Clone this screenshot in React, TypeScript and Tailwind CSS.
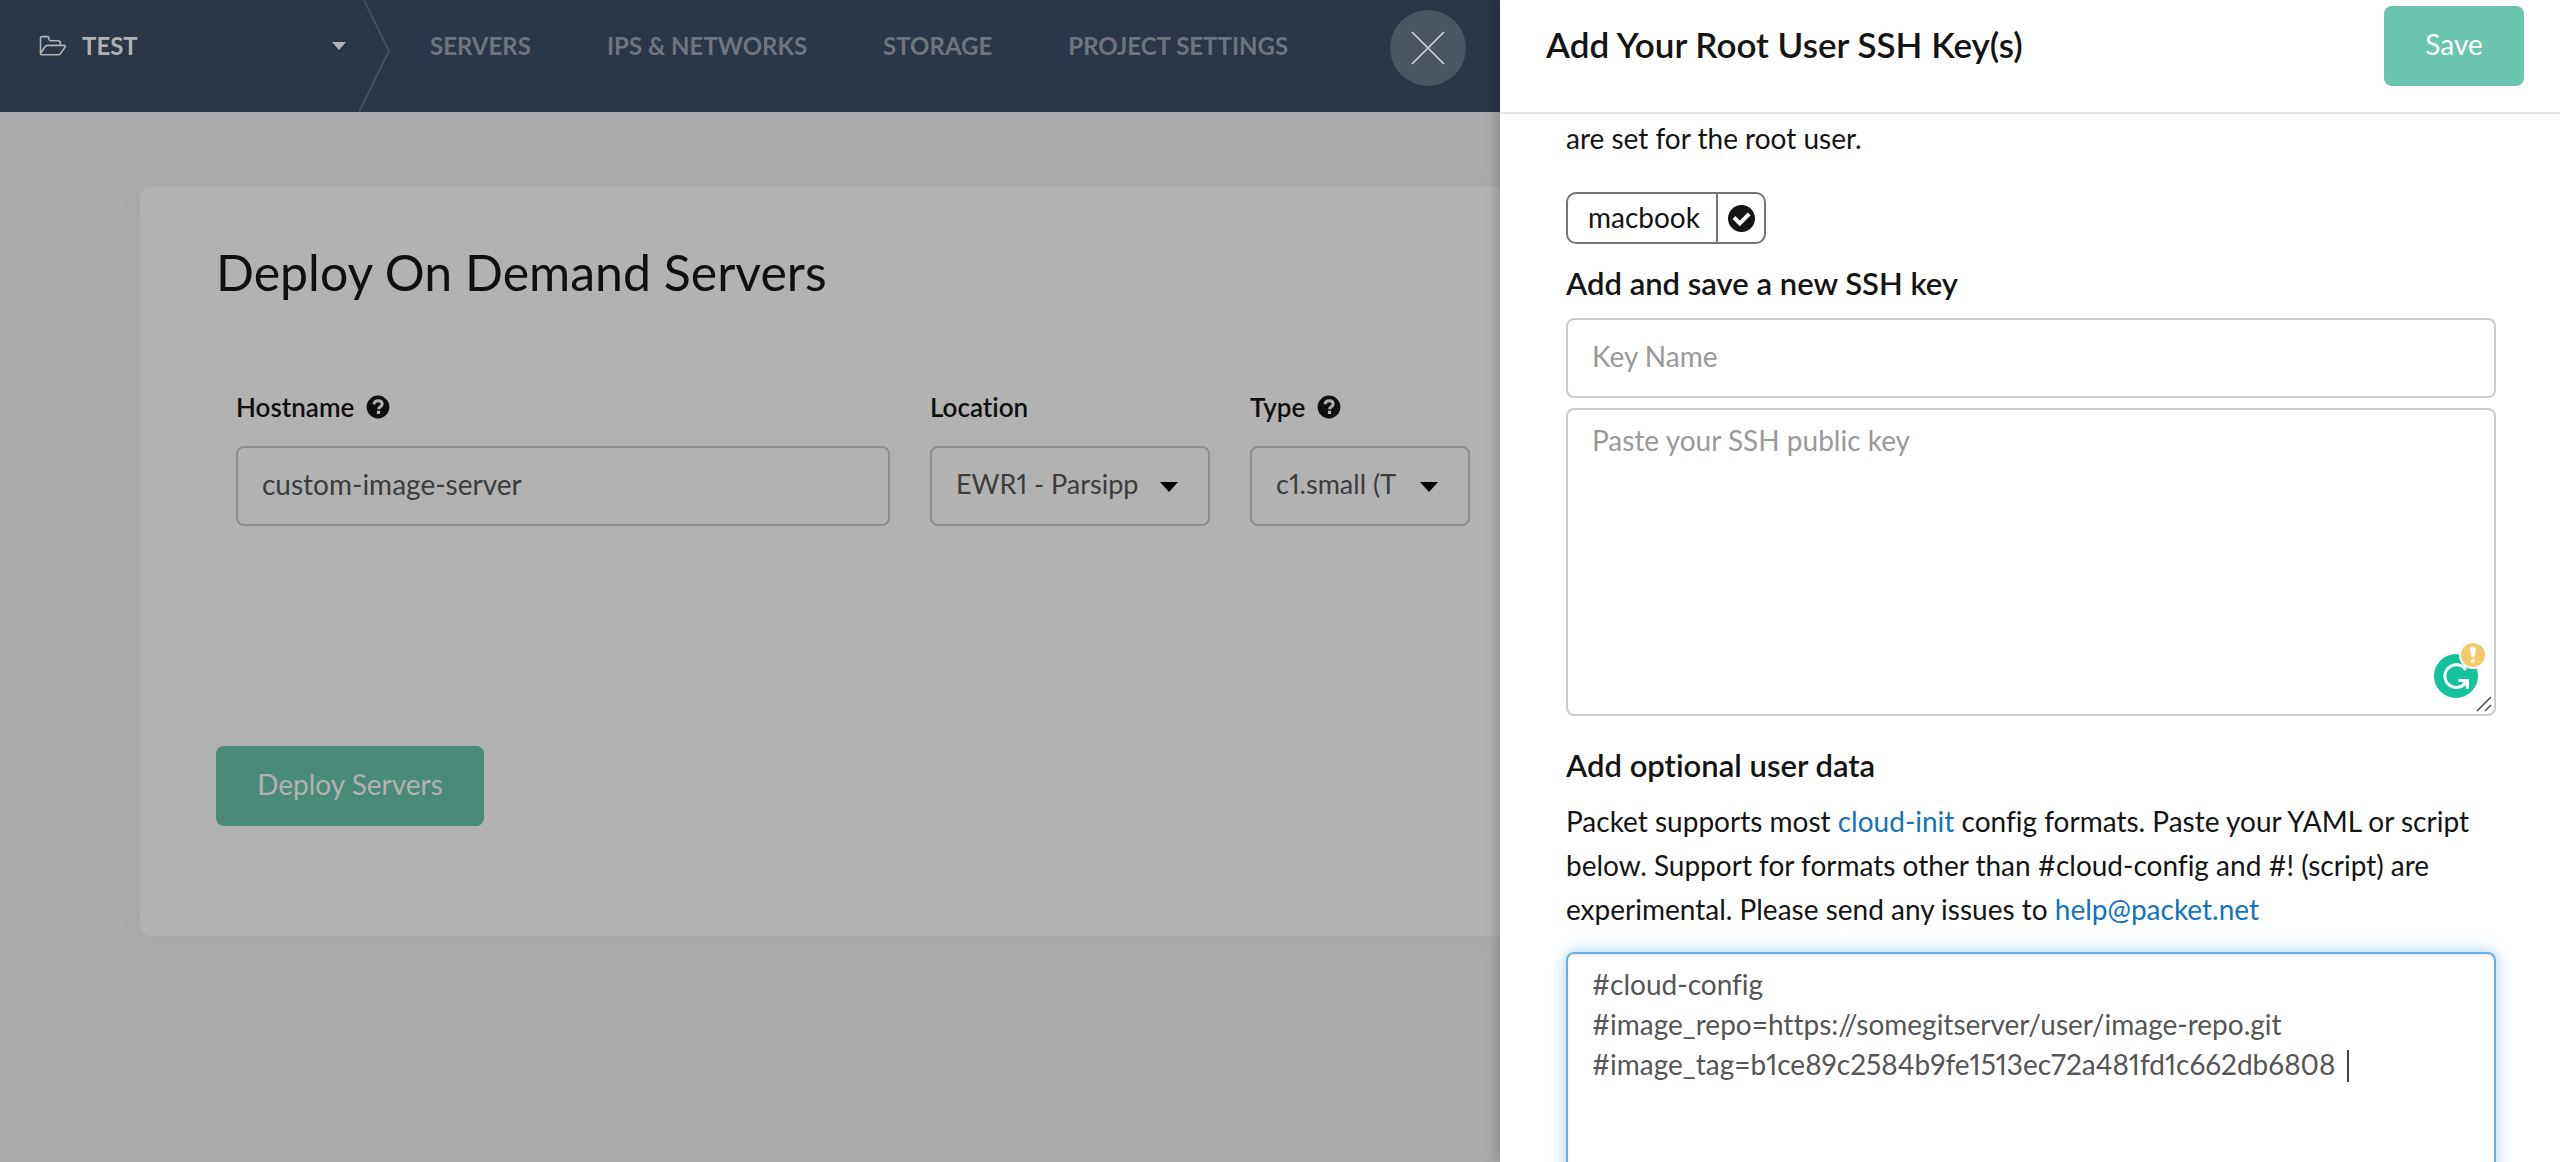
import { useId, type ReactNode } from 'react';

const NAV = ['SERVERS', 'IPS & NETWORKS', 'STORAGE', 'PROJECT SETTINGS'];

const USER_DATA = `#cloud-config
#image_repo=https://somegitserver/user/image-repo.git
#image_tag=b1ce89c2584b9fe1513ec72a481fd1c662db6808`;

function FolderIcon() {
  return (
    <svg viewBox="0 0 28 22" className="h-[22px] w-7 shrink-0" fill="none" stroke="#b2b2b2" strokeWidth="1.6" strokeLinejoin="round" strokeLinecap="round">
      <path d="M1.5 18V3.5C1.5 2.2 2.1 1.6 3.4 1.6H8C9.3 1.6 9.8 2.2 9.9 3.2L10.1 4.6C10.2 5.3 10.6 5.7 11.4 5.7H19C20.6 5.7 21.4 6.4 21.4 8V10.4" />
      <path d="M1.5 18.2L6 11.8C6.7 10.8 7.4 10.4 8.6 10.4H25C26.2 10.4 26.6 11.2 26 12.1L21.8 18.2C21.1 19.3 20.3 19.8 19 19.8H3C1.9 19.8 1.3 19.1 1.5 18.2Z" />
    </svg>
  );
}

function HelpIcon() {
  return (
    <svg viewBox="0 0 24 24" className="size-6 shrink-0">
      <circle cx="12" cy="12" r="11.4" fill="#0f0f0f" />
      <path d="M7.9 9.2C8.3 6.9 9.8 5.7 12.1 5.7C14.5 5.7 16.2 7 16.2 9C16.2 11.7 12.6 11.8 12.6 14.3" fill="none" stroke="#b2b2b2" strokeWidth="3" />
      <rect x="10.9" y="15.8" width="3.2" height="3.2" fill="#b2b2b2" />
    </svg>
  );
}

function AssistantBadge() {
  return (
    <svg viewBox="0 0 54 58" className="absolute right-[9px] bottom-[16px] h-[58px] w-[54px]">
      <circle cx="23" cy="34" r="22" fill="#15c39a" />
      <path d="M32.8 27.8A11.4 11.4 0 1 0 33.8 38.6" fill="none" stroke="#fff" strokeWidth="3" />
      <path d="M25.6 38.4H34.4V47" fill="none" stroke="#fff" strokeWidth="3" />
      <path d="M29.5 43.5L34.2 38.6" fill="none" stroke="#fff" strokeWidth="3" />
      <circle cx="40" cy="13" r="14" fill="#fff" />
      <circle cx="40" cy="13" r="12" fill="#f4cc67" />
      <path d="M37 7.5C37 3.6 43 3.6 43 7.5L41.3 15.2H38.7Z" fill="#fff" />
      <circle cx="40" cy="19" r="2.1" fill="#fff" />
    </svg>
  );
}

function Field({ label, help, className, children }: { label: string; help?: boolean; className: string; children: (id: string) => ReactNode }) {
  const id = useId();
  return (
    <div className={className}>
      <div className="flex items-center gap-3 text-[#0f0f0f]">
        <label htmlFor={id} className="text-[26px] leading-9 font-semibold">{label}</label>
        {help && <HelpIcon />}
      </div>
      <div className="mt-[21px]">{children(id)}</div>
    </div>
  );
}

function SelectBox({ id, value }: { id: string; value: string }) {
  return (
    <div className="relative">
      <select id={id} defaultValue={value} className="h-20 w-full appearance-none rounded-lg border-2 border-[#8e8e8e] bg-transparent pr-14 pb-1 pl-6 text-[27px] leading-10 text-[#3c3c3c]">
        <option>{value}</option>
      </select>
      <svg viewBox="0 0 18 10" className="pointer-events-none absolute top-9 right-8 h-2.5 w-[18px]">
        <path d="M0 0H18L9 10Z" fill="#000" />
      </svg>
    </div>
  );
}

function ProjectHeader() {
  return (
    <header className="relative flex h-28 bg-[#2b3646] pb-5">
      <button className="flex w-[389px] shrink-0 items-center pr-[43px] pl-[39px] text-left">
        <FolderIcon />
        <span className="ml-[15px] flex-1 text-2xl font-bold text-[#b2b2b2]">TEST</span>
        <svg viewBox="0 0 14 8" className="h-2 w-3.5">
          <path d="M0 0H14L7 8Z" fill="#b2b2b2" />
        </svg>
      </button>
      <svg viewBox="0 0 32 112" className="absolute top-0 left-[359px] h-28 w-8" fill="none" stroke="#44505a" strokeWidth="2">
        <path d="M5 0L30 51L0 112" />
      </svg>
      <nav className="ml-[41px] flex items-center gap-[76px] text-2xl font-bold whitespace-nowrap text-[#6f757e]">
        {NAV.map((item) => (
          <a key={item} href="#">{item}</a>
        ))}
      </nav>
      <button aria-label="Close" className="absolute top-2.5 right-[34px] flex size-[76px] items-center justify-center rounded-full bg-[#4c5661]">
        <svg viewBox="0 0 34 34" className="size-[34px]" stroke="#d5d7da" strokeWidth="1.6">
          <path d="M1 1L33 33M33 1L1 33" />
        </svg>
      </button>
    </header>
  );
}

function DeployCard() {
  return (
    <section className="mt-[74px] ml-[140px] rounded-l-xl bg-[#b2b2b2] pt-14 pb-[110px] pl-[76px] shadow-[0_3px_14px_#a8a8a8]">
      <h1 className="text-[50px] leading-[60px] text-[#0f0f0f]">Deploy On Demand Servers</h1>
      <div className="mt-[87px] flex gap-10 pr-[30px] pl-5">
        <Field label="Hostname" help className="flex-1">
          {(id) => (
            <input id={id} defaultValue="custom-image-server" className="h-20 w-full rounded-lg border-2 border-[#8e8e8e] bg-transparent px-6 pb-1 text-[28px] leading-10 text-[#3c3c3c]" />
          )}
        </Field>
        <Field label="Location" className="w-[280px]">
          {(id) => <SelectBox id={id} value="EWR1 - Parsipp" />}
        </Field>
        <Field label="Type" help className="w-[220px]">
          {(id) => <SelectBox id={id} value="c1.small (T" />}
        </Field>
      </div>
      <button className="mt-[220px] block h-20 w-[268px] rounded-lg bg-[#4a8a78] pb-1 text-[28px] text-[#b2b2b2]">Deploy Servers</button>
    </section>
  );
}

function KeyDrawer() {
  return (
    <aside className="relative z-10 flex w-[1060px] shrink-0 flex-col bg-white text-[#141414] shadow-[0_0_14px_rgba(0,0,0,0.3)]">
      <header className="flex h-[114px] shrink-0 items-center justify-between border-b-2 border-[#e6e6e6] pr-9 pb-5 pl-[46px]">
        <h2 className="pb-1 text-[35px] font-semibold">Add Your Root User SSH Key(s)</h2>
        <button className="h-20 w-[140px] rounded-lg bg-[#6bc4ae] pb-1 text-[28px] text-white">Save</button>
      </header>
      <div className="min-h-0 flex-1 overflow-hidden pt-0.5 pr-16 pl-[66px]">
        <p className="text-[28px] leading-[44px]">are set for the root user.</p>
        <label className="mt-8 flex h-[52px] w-[200px] items-stretch rounded-[10px] border-2 border-[#757575] text-[28px]">
          <span className="flex flex-1 items-center pb-0.5 pl-5">macbook</span>
          <span className="grid w-12 place-items-center border-l-2 border-[#757575]">
            <input type="checkbox" defaultChecked className="col-start-1 row-start-1 size-[27px] appearance-none rounded-full bg-[#141414]" />
            <svg viewBox="0 0 27 27" className="pointer-events-none col-start-1 row-start-1 size-[27px]" fill="none" stroke="#fff" strokeWidth="4">
              <path d="M6 12.5L11.8 18.3L21.2 8.9" />
            </svg>
          </span>
        </label>
        <h3 className="mt-[21px] text-[31px] leading-9 font-semibold">Add and save a new SSH key</h3>
        <input aria-label="Key Name" placeholder="Key Name" className="mt-[17px] block h-20 w-full rounded-lg border-2 border-[#cccccc] px-6 pb-1 text-[28px] leading-10 placeholder:text-[#999999]" />
        <div className="relative mt-2.5">
          <textarea aria-label="SSH public key" placeholder="Paste your SSH public key" className="block h-[308px] w-full resize-none rounded-lg border-2 border-[#cccccc] px-6 py-2.5 text-[28px] leading-10 placeholder:text-[#999999]" />
          <AssistantBadge />
          <svg viewBox="0 0 16 16" className="absolute right-1 bottom-1 size-4" stroke="#555" strokeWidth="1.6">
            <path d="M1 15L15 1M9 15L15 9" />
          </svg>
        </div>
        <h3 className="mt-[31px] text-[31px] leading-9 font-semibold">Add optional user data</h3>
        <p className="mt-4 text-[28px] leading-[44px]">
          Packet supports most <a href="#" className="text-[#1273bf]">cloud-init</a> config formats. Paste your YAML or script below. Support for formats other than #cloud-config and #! (script) are experimental. Please send any issues to{' '}
          <a href="#" className="text-[#1273bf]">help@packet.net</a>
        </p>
        <div className="relative mt-[21px]">
          <textarea aria-label="User data" defaultValue={USER_DATA} spellCheck={false} className="block h-[308px] w-full resize-none rounded-lg border-2 border-[#66afe9] px-6 py-2.5 text-[28px] leading-10 text-[#555555] shadow-[inset_0_2px_2px_rgba(0,0,0,0.075),0_0_16px_rgba(102,175,233,0.6)] outline-none" />
          <span className="absolute top-[98px] left-[781px] h-8 w-0.5 bg-[#444444]" />
        </div>
      </div>
    </aside>
  );
}

export default function App() {
  return (
    <div className="flex h-screen overflow-hidden bg-[#a9abad] font-[Lato,sans-serif] proportional-nums [font-variant-ligatures:no-common-ligatures]">
      <main className="min-w-0 flex-1">
        <ProjectHeader />
        <DeployCard />
      </main>
      <KeyDrawer />
    </div>
  );
}
